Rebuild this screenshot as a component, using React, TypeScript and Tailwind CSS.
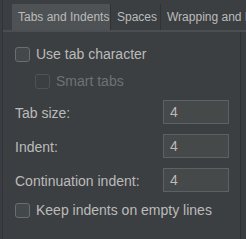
import React from "react";

function Checkbox({ disabled }: { disabled?: boolean }) {
  return (
    <div
      className={
        disabled
          ? "w-[15px] h-[15px] shrink-0 rounded-[3px] border border-[#505355] bg-[#3c3f41]"
          : "w-[15px] h-[15px] shrink-0 rounded-[3px] border border-[#6b6e70] bg-[#43494a]"
      }
    />
  );
}

function Field({ label }: { label: string }) {
  return (
    <div className="flex items-center h-[24px]">
      <div className="w-[148px] text-[14px] text-[#bbbbbb] pt-[2px]">{label}</div>
      <div className="w-[66px] h-[24px] border border-[#5e6164] bg-[#45494a] flex items-center pl-[6px] text-[14px] text-[#bbbbbb]">
        4
      </div>
    </div>
  );
}

export default function App() {
  return (
    <div
      className="w-[246px] h-[239px] bg-[#3c3f41] flex overflow-hidden"
      style={{ fontFamily: "'Liberation Sans', Arial, sans-serif" }}
    >
      <div className="w-[3px] shrink-0 bg-[#3a3d43] border-r border-[#313335]" />
      <div className="flex-1 flex flex-col min-w-0">
        <div className="pt-[4px] pl-[9px] flex h-[30px] text-[12px] text-[#bbbbbb] whitespace-nowrap">
          <div className="h-[26px] w-[99px] shrink-0 bg-[#4e5254] flex items-center pl-[6px] border-r border-[#323232]">
            Tabs and Indents
          </div>
          <div className="h-[26px] w-[50px] shrink-0 bg-[#3c3f41] flex items-center pl-[6px] border-r border-[#323232]">
            Spaces
          </div>
          <div className="h-[26px] flex-1 bg-[#3c3f41] flex items-center pl-[6px] overflow-hidden">
            Wrapping and Braces
          </div>
        </div>
        <div className="h-[2px] bg-[#4b4f52]" />
        <div className="flex-1 flex">
          <div className="w-[238px] shrink-0 border-r border-[#2f3133] pl-[12px] pt-[15px] flex flex-col">
            <div className="flex items-center gap-[6px] h-[15px]">
              <Checkbox />
              <span className="text-[14px] text-[#bbbbbb]">Use tab character</span>
            </div>
            <div className="flex items-center gap-[6px] h-[15px] mt-[12px] pl-[20px]">
              <Checkbox disabled />
              <span className="text-[14px] text-[#6f7274]">Smart tabs</span>
            </div>
            <div className="flex flex-col gap-[10px] mt-[11px]">
              <Field label="Tab size:" />
              <Field label="Indent:" />
              <Field label="Continuation indent:" />
            </div>
            <div className="flex items-center gap-[6px] h-[15px] mt-[11px]">
              <Checkbox />
              <span className="text-[14px] text-[#bbbbbb]">Keep indents on empty lines</span>
            </div>
          </div>
          <div className="flex-1 bg-[#3a3d40]" />
        </div>
      </div>
    </div>
  );
}
